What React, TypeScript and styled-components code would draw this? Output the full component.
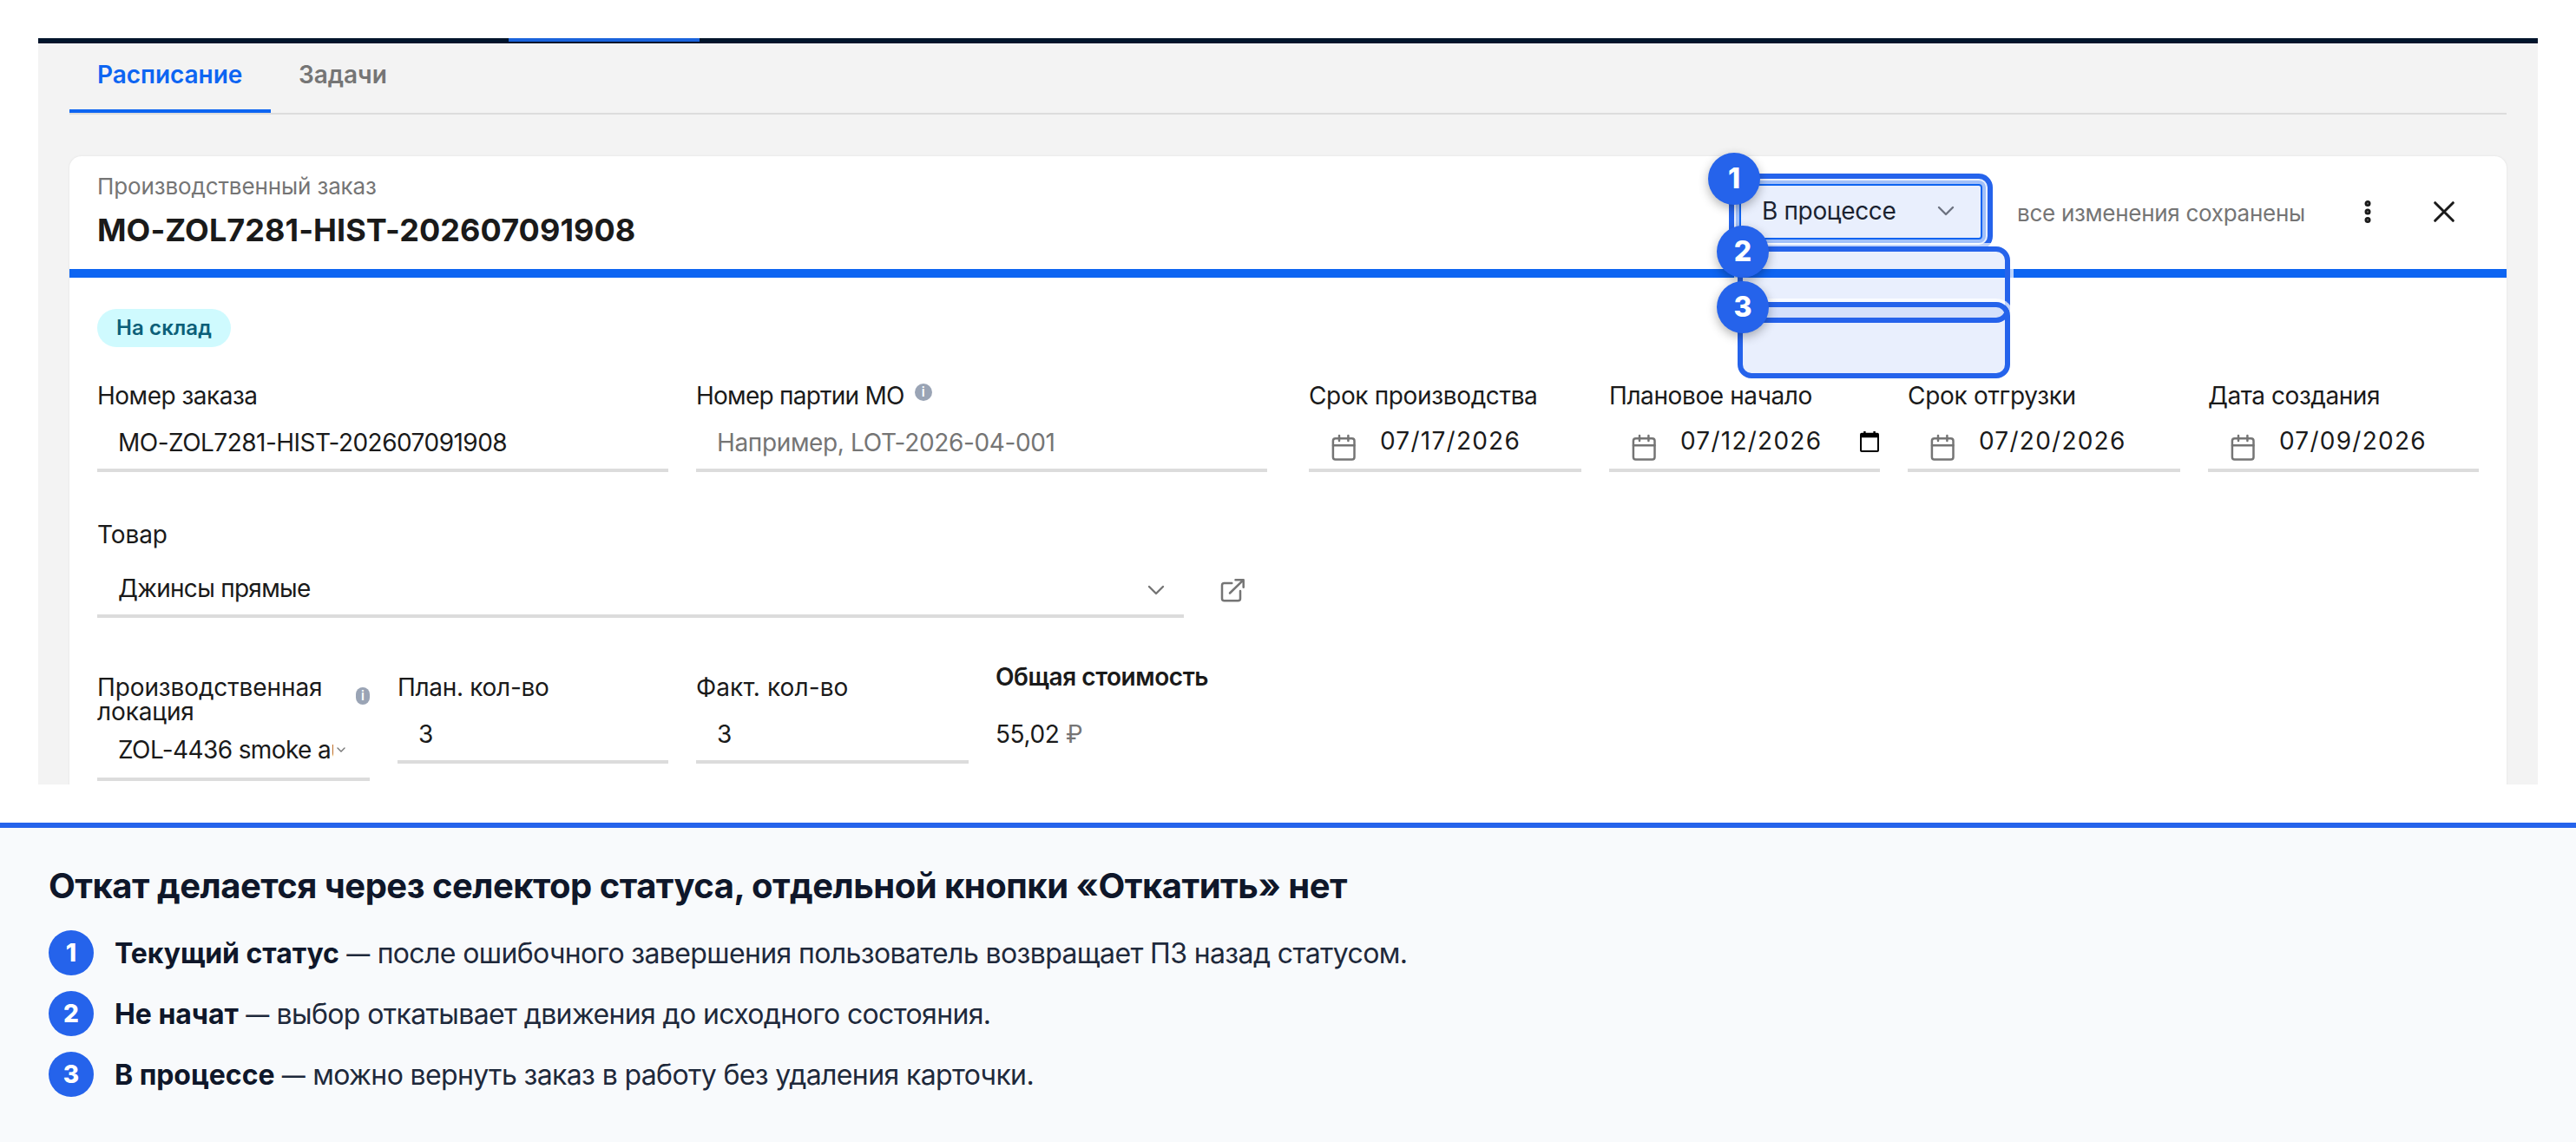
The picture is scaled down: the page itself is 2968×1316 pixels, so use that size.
import React from "react";
import styled, { createGlobalStyle } from "styled-components";

const Global = createGlobalStyle`
  *, *::before, *::after { box-sizing: border-box; }
  body { margin: 0; background: #fff; font-family: Inter, "Liberation Sans", sans-serif; color: #1a1a1a; }
`;

const Text = styled.span<{ $size?: number; $track?: number; $weight?: number; $color?: string; $line?: number }>`
  font-size: ${(p) => p.$size ?? 28}px;
  line-height: ${(p) => p.$line ?? 32}px;
  font-weight: ${(p) => p.$weight ?? 400};
  letter-spacing: ${(p) => p.$track ?? 0}px;
  color: ${(p) => p.$color ?? "#1a1a1a"};
  white-space: nowrap;
`;

const Screen = styled.main`
  position: relative;
  height: 860px;
  margin: 44px 44px 0;
  background: #f3f3f3;
  overflow: hidden;
`;
const TopBar = styled.div`
  height: 6px;
  padding-left: 542px;
  background: #00142b;
`;
const TopBarMark = styled.div`
  width: 220px;
  height: 4px;
  background: #1a63dc;
`;
const Tabs = styled.nav`
  display: flex;
  height: 82px;
  margin: 0 36px;
  border-bottom: 2px solid #dcdcdc;
`;
const Tab = styled.div<{ $active?: boolean; $width: number }>`
  width: ${(p) => p.$width}px;
  height: 80px;
  padding: 20px 0 0 32px;
  border-bottom: 4px solid ${(p) => (p.$active ? "#0d65f2" : "transparent")};
`;
const Card = styled.section`
  height: 760px;
  margin: 48px 36px 0;
  background: #fff;
  border-radius: 14px 14px 0 0;
  box-shadow: 0 0 3px rgba(0, 0, 0, 0.08);
`;
const CardHeader = styled.header`
  display: flex;
  justify-content: space-between;
  height: 140px;
  padding: 0 40px 0 32px;
  border-bottom: 10px solid #0d65f2;
`;
const Titles = styled.div`
  display: flex;
  flex-direction: column;
  gap: 10px;
  padding-top: 19px;
`;
const Actions = styled.div`
  display: flex;
  align-items: center;
  height: 64px;
  margin-top: 32px;
`;
const StatusSelect = styled.div`
  display: flex;
  align-items: center;
  justify-content: space-between;
  width: 280px;
  height: 64px;
  margin-right: 40px;
  padding: 0 30px 3px 24px;
  border: 2px solid #0d65f2;
  border-radius: 4px;
  box-shadow: 0 0 0 4px #b0cbfb;
`;
const SavedNote = styled.div`
  width: 334px;
  margin-right: 38px;
  padding-top: 3px;
`;
const IconButton = styled.div`
  display: flex;
  align-items: center;
  justify-content: center;
  width: 64px;
  height: 64px;
  & + & { margin-left: 24px; }
`;
const Body = styled.div`
  padding: 36px 32px 0;
`;
const Chip = styled.div`
  display: flex;
  align-items: center;
  width: 154px;
  height: 44px;
  padding-left: 22px;
  border-radius: 22px;
  background: #cffafe;
`;
const TopRow = styled.div`
  display: grid;
  grid-template-columns: 1348px 1348px;
  gap: 48px;
  margin-top: 40px;
`;
const Pair = styled.div`
  display: grid;
  grid-template-columns: 658px 658px;
  gap: 32px;
`;
const Quad = styled.div`
  display: grid;
  grid-template-columns: 314px 312px 314px 312px;
  gap: 32px;
  align-items: start;
`;
const QuantityRow = styled(Quad)`
  margin-top: 51px;
`;
const Field = styled.div<{ $offset?: number }>`
  display: flex;
  flex-direction: column;
  padding-top: ${(p) => p.$offset ?? 0}px;
`;
const Label = styled.div<{ $spread?: boolean }>`
  display: flex;
  align-items: flex-start;
  justify-content: ${(p) => (p.$spread ? "space-between" : "flex-start")};
`;
const Control = styled.div<{ $height: number; $top: number; $left?: number }>`
  display: flex;
  align-items: flex-start;
  height: ${(p) => p.$height}px;
  padding: ${(p) => p.$top}px 0 0 ${(p) => p.$left ?? 24}px;
  border-bottom: 4px solid #dcdcdc;
`;
const Clip = styled.div`
  width: 248px;
  overflow: hidden;
  height: 34px;
`;
const CalendarSlot = styled.div`
  display: flex;
  width: 56px;
  padding-top: 8px;
`;
const PickerSlot = styled.div`
  display: flex;
  flex: 1;
  justify-content: flex-end;
  padding: 5px 1px 0 0;
`;
const ProductRow = styled.div`
  display: flex;
  margin-top: 56px;
`;
const ProductField = styled(Field)`
  width: 1252px;
`;
const ChevronSlot = styled.div<{ $top: number; $right: number }>`
  display: flex;
  margin: ${(p) => p.$top}px ${(p) => p.$right}px 0 auto;
`;
const LinkSlot = styled.div`
  display: flex;
  padding: 66px 0 0 42px;
`;
const Total = styled.div`
  display: flex;
  flex-direction: column;
  gap: 34px;
  padding-top: 1px;
  margin-left: -1px;
`;
const InfoDot = styled.span<{ $w: number; $ml: number; $mt: number }>`
  display: flex;
  flex: none;
  align-items: center;
  justify-content: center;
  width: ${(p) => p.$w}px;
  height: 20px;
  margin: ${(p) => p.$mt}px 0 0 ${(p) => p.$ml}px;
  border-radius: 10px;
  background: #9aa4b5;
  color: #fff;
  font-size: 15px;
  font-weight: 600;
  line-height: 20px;
`;

const Highlight = styled.div<{ $x: number; $y: number; $w: number }>`
  position: absolute;
  left: ${(p) => p.$x}px;
  top: ${(p) => p.$y}px;
  width: ${(p) => p.$w}px;
  height: 88px;
  border: 6px solid #2563eb;
  border-radius: 16px;
  background: rgba(37, 99, 235, 0.1);
  background-clip: padding-box;
  box-shadow: 0 0 0 4px rgba(255, 255, 255, 0.72);
`;
const Marker = styled.div`
  position: absolute;
  left: -30px;
  top: -30px;
  display: flex;
  align-items: center;
  justify-content: center;
  width: 60px;
  height: 60px;
  border-radius: 50%;
  background: #2563eb;
  color: #fff;
  font-size: 32px;
  font-weight: 800;
  line-height: 1;
  box-shadow: 0 4px 12px rgba(0, 0, 0, 0.3);
`;

const Legend = styled.footer`
  height: 368px;
  margin-top: 44px;
  padding: 43px 56px 0;
  border-top: 6px solid #2563eb;
  background: #f8fafc;
`;
const LegendTitle = styled.h1`
  margin: 0 0 27px;
  color: #0f172a;
  font-size: 40px;
  font-weight: 700;
  line-height: 48px;
  letter-spacing: -0.5px;
`;
const LegendList = styled.div`
  display: flex;
  flex-direction: column;
  align-items: flex-start;
  gap: 18px;
`;
const LegendItem = styled.div`
  display: flex;
  align-items: center;
  gap: 24px;
  height: 52px;
  color: #1e293b;
  font-size: 32px;
  letter-spacing: -0.63px;
  white-space: nowrap;
`;
const LegendTerm = styled.b`
  color: #0f172a;
  font-weight: 700;
  letter-spacing: -0.05px;
`;
const Dash = styled.span`
  font-size: 27px;
  font-weight: 500;
  letter-spacing: 0;
  vertical-align: 1px;
  line-height: 1;
`;
const LegendNumber = styled.span`
  display: flex;
  align-items: center;
  justify-content: center;
  width: 52px;
  height: 52px;
  border-radius: 50%;
  background: #2563eb;
  color: #fff;
  font-size: 28px;
  font-weight: 800;
  letter-spacing: 0;
`;

const Chevron = ({ w = 20, h = 12, color = "#757575", stroke = 2.4 }) => (
  <svg width={w} height={h} viewBox="0 0 20 12" fill="none" stroke={color} strokeWidth={stroke} strokeLinecap="round" strokeLinejoin="round">
    <path d="M2 2l8 8 8-8" />
  </svg>
);
const CalendarIcon = () => (
  <svg width="28" height="32" viewBox="0 0 28 32" fill="none" stroke="#757575" strokeWidth="2.5" strokeLinecap="round">
    <rect x="1.9" y="5.2" width="24.6" height="24.4" rx="2.8" />
    <path d="M2 13.2h24.4M9 2v6M19.4 2v6" />
  </svg>
);
const PickerIcon = () => (
  <svg width="22" height="24" viewBox="0 0 22 24" fill="#000">
    <path fillRule="evenodd" d="M4.2 0h2.4v1.8h8.8V0h2.4v1.8H20a2 2 0 0 1 2 2V22a2 2 0 0 1-2 2H2a2 2 0 0 1-2-2V3.8a2 2 0 0 1 2-2h2.2zM2 7.2V22h18V7.2z" />
  </svg>
);
const ExternalIcon = () => (
  <svg width="30" height="30" viewBox="0 0 30 30" fill="none" stroke="#757575" strokeWidth="2.5" strokeLinecap="round" strokeLinejoin="round">
    <path d="M13.3 6H4.5A2.5 2.5 0 0 0 2 8.5v15.3a2.5 2.5 0 0 0 2.5 2.5h16a2.5 2.5 0 0 0 2.5-2.5V15M11 17.5L26.5 2.3M17.5 2.3h9.2v8.4" />
  </svg>
);
const KebabIcon = () => (
  <svg width="10" height="34" viewBox="0 0 10 34" fill="#777" stroke="#1a1a1a" strokeWidth="2.6">
    <circle cx="5" cy="7.5" r="2.2" />
    <circle cx="5" cy="17" r="2.2" />
    <circle cx="5" cy="26.5" r="2.2" />
  </svg>
);
const CloseIcon = () => (
  <svg width="28" height="28" viewBox="0 0 28 28" stroke="#1a1a1a" strokeWidth="3" strokeLinecap="round">
    <path d="M3.7 3.7l20.6 20.6M24.3 3.7L3.7 24.3" />
  </svg>
);

const dates = [
  { label: "Срок производства", value: "07/17/2026", track: -0.35 },
  { label: "Плановое начало", value: "07/12/2026", track: -0.4, picker: true },
  { label: "Срок отгрузки", value: "07/20/2026", track: -0.3 },
  { label: "Дата создания", value: "07/09/2026", track: -0.45 },
];
const legend = [
  { title: "Текущий статус", text: "после ошибочного завершения пользователь возвращает ПЗ назад статусом." },
  { title: "Не начат", text: "выбор откатывает движения до исходного состояния." },
  { title: "В процессе", text: "можно вернуть заказ в работу без удаления карточки." },
];

export default function App() {
  return (
    <>
      <Global />
      <Screen>
        <TopBar><TopBarMark /></TopBar>
        <Tabs>
          <Tab $active $width={232}><Text $weight={600} $track={-0.05} $color="#0d65f2">Расписание</Text></Tab>
          <Tab $width={170}><Text $weight={600} $track={-0.05} $color="#757575">Задачи</Text></Tab>
        </Tabs>
        <Card>
          <CardHeader>
            <Titles>
              <Text $size={26} $track={-0.12} $color="#757575">Производственный заказ</Text>
              <Text $size={36} $weight={700} $line={48} $track={0.07}>MO-ZOL7281-HIST-202607091908</Text>
            </Titles>
            <Actions>
              <StatusSelect><Text $track={-0.35}>В процессе</Text><Chevron /></StatusSelect>
              <SavedNote><Text $size={26} $track={-0.28} $color="#757575">все изменения сохранены</Text></SavedNote>
              <IconButton><KebabIcon /></IconButton>
              <IconButton><CloseIcon /></IconButton>
            </Actions>
          </CardHeader>
          <Body>
            <Chip><Text $size={24} $weight={600} $track={0.12} $color="#0b5f78">На склад</Text></Chip>
            <TopRow>
              <Pair>
                <Field>
                  <Label><Text $track={-0.5}>Номер заказа</Text></Label>
                  <Control $height={72} $top={22}><Text $track={-0.52}>MO-ZOL7281-HIST-202607091908</Text></Control>
                </Field>
                <Field>
                  <Label><Text $track={-0.75}>Номер партии МО</Text><InfoDot $w={20} $ml={12} $mt={2}>i</InfoDot></Label>
                  <Control $height={72} $top={22}><Text $track={-0.36} $color="#757575">Например, LOT-2026-04-001</Text></Control>
                </Field>
              </Pair>
              <Quad>
                {dates.map((d) => (
                  <Field key={d.label}>
                    <Label><Text $track={d.track}>{d.label}</Text></Label>
                    <Control $height={72} $top={20} $left={26}>
                      <CalendarSlot><CalendarIcon /></CalendarSlot>
                      <Text $track={1.25}>{d.value}</Text>
                      {d.picker && <PickerSlot><PickerIcon /></PickerSlot>}
                    </Control>
                  </Field>
                ))}
              </Quad>
            </TopRow>
            <ProductRow>
              <ProductField>
                <Label><Text $track={-0.1}>Товар</Text></Label>
                <Control $height={80} $top={30}>
                  <Text $track={-0.72}>Джинсы прямые</Text>
                  <ChevronSlot $top={12} $right={22}><Chevron /></ChevronSlot>
                </Control>
              </ProductField>
              <LinkSlot><ExternalIcon /></LinkSlot>
            </ProductRow>
            <QuantityRow>
              <Field $offset={15}>
                <Label $spread>
                  <Text $line={28} $track={-0.12}>Производственная<br />локация</Text>
                  <InfoDot $w={16} $ml={0} $mt={14}>i</InfoDot>
                </Label>
                <Control $height={66} $top={14}>
                  <Clip><Text $track={-0.6}>ZOL-4436 smoke auto</Text></Clip>
                  <ChevronSlot $top={12} $right={28}><Chevron w={10} h={8} stroke={2.8} /></ChevronSlot>
                </Control>
              </Field>
              <Field $offset={15}>
                <Label><Text $line={28} $track={-0.3}>План. кол-во</Text></Label>
                <Control $height={74} $top={24}><Text>3</Text></Control>
              </Field>
              <Field $offset={15}>
                <Label><Text $line={28} $track={0.1}>Факт. кол-во</Text></Label>
                <Control $height={74} $top={24}><Text>3</Text></Control>
              </Field>
              <Total>
                <Text $weight={600} $track={-0.45}>Общая стоимость</Text>
                <Text $track={-0.4}>55,02 <Text $color="#757575">₽</Text></Text>
              </Total>
            </QuantityRow>
          </Body>
        </Card>
        <Highlight $x={1948} $y={156} $w={304}><Marker>1</Marker></Highlight>
        <Highlight $x={1958} $y={240} $w={314}><Marker>2</Marker></Highlight>
        <Highlight $x={1958} $y={304} $w={314}><Marker>3</Marker></Highlight>
      </Screen>
      <Legend>
        <LegendTitle>Откат делается через селектор статуса, отдельной кнопки «Откатить» нет</LegendTitle>
        <LegendList>
          {legend.map((item, i) => (
            <LegendItem key={item.title}>
              <LegendNumber>{i + 1}</LegendNumber>
              <span><LegendTerm>{item.title}</LegendTerm> <Dash>—</Dash> {item.text}</span>
            </LegendItem>
          ))}
        </LegendList>
      </Legend>
    </>
  );
}
